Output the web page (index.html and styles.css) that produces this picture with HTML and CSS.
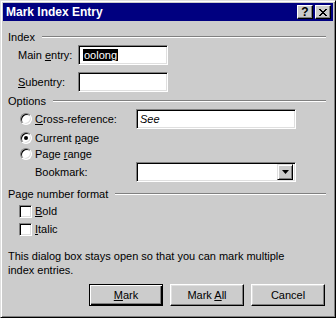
FILE: index.html
```
<!DOCTYPE html>
<html lang="en">
<head>
    <meta charset="UTF-8">
    <title>Mark Index Entry</title>
    <link rel="stylesheet" href="styles.css">
</head>
<body>
    <div class="dialog">
        <div class="titlebar">
            <span class="title">Mark Index Entry</span>
            <div class="title-buttons">
                <span class="cap-btn">?</span>
                <span class="cap-btn close">
                    <svg width="8" height="7" viewBox="0 0 8 7"><path d="M0 0h2v1h1v1h2V1h1V0h2v1H7v1H6v1H5v1h1v1h1v1h1v1H6V6H5V5H3v1H2v1H0V6h1V5h1V4h1V3H2V2H1V1H0z" fill="#000"/></svg>
                </span>
            </div>
        </div>

        <div class="content">
            <div class="group-head"><span>Index</span><span class="rule"></span></div>
            <div class="row field-row">
                <label class="field-label">Main <u>e</u>ntry:</label>
                <div class="textbox short"><span class="sel">oolong</span></div>
            </div>
            <div class="row field-row second">
                <label class="field-label"><u>S</u>ubentry:</label>
                <div class="textbox short"></div>
            </div>

            <div class="group-head options"><span>Options</span><span class="rule"></span></div>
            <div class="row opt-row">
                <span class="radio"></span>
                <label class="opt-label"><u>C</u>ross-reference:</label>
                <div class="textbox wide"><i>See</i></div>
            </div>
            <div class="row radio-row">
                <span class="radio checked"></span>
                <label>Current <u>p</u>age</label>
            </div>
            <div class="row radio-row range">
                <span class="radio"></span>
                <label>Page <u>r</u>ange</label>
            </div>
            <div class="row opt-row">
                <label class="bm-label">Bookmark:</label>
                <div class="textbox wide combo">
                    <span class="drop-btn">
                        <svg width="7" height="4" viewBox="0 0 7 4"><path d="M0 0h7L3.5 4z" fill="#000"/></svg>
                    </span>
                </div>
            </div>

            <div class="group-head format"><span>Page number format</span><span class="rule"></span></div>
            <div class="row check-row">
                <span class="checkbox"></span>
                <label><u>B</u>old</label>
            </div>
            <div class="row check-row">
                <span class="checkbox"></span>
                <label><u>I</u>talic</label>
            </div>

            <p class="note">This dialog box stays open so that you can mark multiple index entries.</p>

            <div class="buttons">
                <button class="btn default"><u>M</u>ark</button>
                <button class="btn">Mark <u>A</u>ll</button>
                <button class="btn">Cancel</button>
            </div>
        </div>
    </div>
</body>
</html>
```

FILE: styles.css
```
body {
    margin: 0;
    padding: 0;
    font-family: "Liberation Sans", Arial, sans-serif;
    font-size: 11px;
    color: #000;
    background-color: #cccccc;
}

.dialog {
    width: 336px;
    height: 318px;
    box-sizing: border-box;
    background-color: #cccccc;
    border: 1px solid;
    border-color: #dfdfdf #000 #000 #dfdfdf;
    box-shadow: inset 1px 1px #fff, inset -1px -1px #808080;
    padding: 2px;
}

.titlebar {
    height: 18px;
    background-color: #000080;
    color: #fff;
    display: flex;
    align-items: center;
    justify-content: space-between;
    padding: 0 2px 0 3px;
}

.title {
    font-weight: bold;
    font-size: 12px;
}

.title-buttons {
    display: flex;
    gap: 2px;
}

.cap-btn {
    width: 16px;
    height: 14px;
    box-sizing: border-box;
    background-color: #cccccc;
    color: #000;
    font-weight: bold;
    font-size: 12px;
    display: flex;
    align-items: center;
    justify-content: center;
    border: 1px solid;
    border-color: #fff #000 #000 #fff;
    box-shadow: inset -1px -1px #808080;
}

.content {
    padding: 8px 7px 0 5px;
}

.row {
    display: flex;
    align-items: center;
}

.group-head {
    display: flex;
    align-items: center;
    height: 16px;
}

.group-head .rule {
    flex: 1;
    height: 0;
    border-top: 1px solid #808080;
    border-bottom: 1px solid #fff;
    margin-left: 7px;
}

.group-head.options {
    margin-top: 1px;
}

.group-head.format {
    margin-top: 4px;
}

.field-row {
    height: 20px;
}

.field-row.second {
    margin-top: 7px;
}

.field-label {
    width: 60px;
    padding-left: 10px;
}

.textbox {
    height: 20px;
    box-sizing: border-box;
    background-color: #fff;
    border: 1px solid;
    border-color: #808080 #fff #fff #808080;
    box-shadow: inset 1px 1px #000, inset -1px -1px #dfdfdf;
    padding: 2px 3px;
    display: flex;
    align-items: center;
}

.textbox.short {
    width: 90px;
}

.textbox.wide {
    width: 160px;
    margin-left: auto;
    margin-right: 30px;
}

.sel {
    background-color: #000;
    color: #fff;
    padding: 0 1px;
    border-left: 1px solid #fff;
}

.opt-row {
    height: 20px;
}

.radio-row {
    height: 17px;
}

.radio-row.range {
    height: 16px;
}

.radio {
    width: 12px;
    height: 12px;
    box-sizing: border-box;
    border-radius: 50%;
    background-color: #fff;
    border: 1px solid;
    border-color: #808080 #fff #fff #808080;
    box-shadow: inset 1px 1px #000, inset -1px -1px #dfdfdf;
    margin: 0 3px 0 12px;
    position: relative;
}

.radio.checked::after {
    content: "";
    position: absolute;
    left: 3px;
    top: 3px;
    width: 4px;
    height: 4px;
    border-radius: 50%;
    background-color: #000;
}

.bm-label {
    padding-left: 27px;
}

.combo {
    padding: 2px;
    justify-content: flex-end;
}

.drop-btn {
    width: 16px;
    height: 16px;
    box-sizing: border-box;
    background-color: #cccccc;
    border: 1px solid;
    border-color: #dfdfdf #000 #000 #dfdfdf;
    box-shadow: inset 1px 1px #fff, inset -1px -1px #808080;
    display: flex;
    align-items: center;
    justify-content: center;
}

.check-row {
    height: 18px;
}

.check-row:first-of-type {
    margin-top: 2px;
}

.checkbox {
    width: 13px;
    height: 13px;
    box-sizing: border-box;
    background-color: #fff;
    border: 1px solid;
    border-color: #808080 #fff #fff #808080;
    box-shadow: inset 1px 1px #000, inset -1px -1px #dfdfdf;
    margin: 0 3px 0 11px;
}

.note {
    margin: 11px 0 0 0;
    line-height: 14px;
    width: 280px;
}

.buttons {
    display: flex;
    justify-content: flex-end;
    gap: 7px;
    margin-top: 7px;
    padding-right: 1px;
}

.btn {
    width: 74px;
    height: 22px;
    font-family: "Liberation Sans", Arial, sans-serif;
    font-size: 11px;
    background-color: #cccccc;
    color: #000;
    border: 1px solid;
    border-color: #fff #000 #000 #fff;
    box-shadow: inset -1px -1px #808080, inset 1px 1px #dfdfdf;
    padding: 0;
}

.btn.default {
    border: 1px solid #000;
    box-shadow: inset 1px 1px #fff, inset -1px -1px #000, inset -2px -2px #808080;
}
```
